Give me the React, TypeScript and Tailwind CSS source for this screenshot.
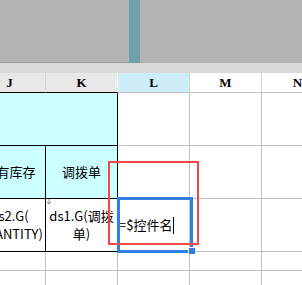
const cjk = "font-['Noto_Sans_CJK_SC','Noto_Sans',sans-serif]";

function HeadCell({ label, className }: { label: string; className: string }) {
  return (
    <div
      className={`flex items-center justify-center border-r border-b font-['Liberation_Serif',serif] text-[13px] font-bold leading-none text-black ${className}`}
    >
      {label}
    </div>
  );
}

export default function App() {
  return (
    <div className={`relative h-[285px] w-[302px] overflow-hidden bg-white ${cjk}`}>
      {/* window chrome above the sheet */}
      <div className="flex h-[63px]">
        <div className="h-[63px] w-[129px] border-b border-[#9a9a9a] bg-[#b3b3b3]" />
        <div className="h-[63px] w-[11px] bg-[#6fa1ac]" />
        <div className="h-[63px] flex-1 bg-[#b3b3b3]" />
      </div>
      <div className="h-[10px] bg-[#d9d9db]" />

      <div className="-ml-[26px] grid grid-cols-[72px_72px_72px_72px_72px] grid-rows-[20px_53px_53px_53px_19px_19px] text-[13px] text-black">
        {/* column headers */}
        <HeadCell label="J" className="border-r-[#d4d4d4] border-b-black bg-[#e8e8e8]" />
        <HeadCell label="K" className="border-r-white border-b-black bg-[#e8e8e8]" />
        <HeadCell label="L" className="border-r-[#d4d4d4] border-b-[#c0c0c0] bg-[#cdeef9]" />
        <HeadCell label="M" className="border-r-[#d4d4d4] border-b-[#c0c0c0] bg-white" />
        <HeadCell label="N" className="border-r-[#d4d4d4] border-b-[#c0c0c0] bg-white" />

        {/* row 1: merged title */}
        <div className="col-span-2 border-r border-b border-black bg-[#ccffff]" />
        <div className="border-r border-b border-[#c0c0c0]" />
        <div className="border-r border-b border-[#c0c0c0]" />
        <div className="border-r border-b border-[#c0c0c0]" />

        {/* row 2 */}
        <div className="flex items-center justify-center border-r border-b border-black bg-[#ccffff]">现有库存</div>
        <div className="flex items-center justify-center border-r border-b border-black bg-[#ccffff]">调拨单</div>
        <div className="border-r border-b border-[#c0c0c0]" />
        <div className="border-r border-b border-[#c0c0c0]" />
        <div className="border-r border-b border-[#c0c0c0]" />

        {/* row 3 */}
        <div className="flex items-center justify-center border-r border-b border-black text-center leading-[18px]">
          <span>
            ds2.G(
            <br />
            QUANTITY)
          </span>
        </div>
        <div className="relative flex items-center justify-center border-r border-b border-black text-center leading-[18px]">
          <svg className="absolute left-[0px] top-[0px]" width="6" height="6" viewBox="0 0 6 6">
            <path d="M3 0V5M1 3L3 5L5 3" stroke="#8a8a8a" strokeWidth="1" fill="none" />
          </svg>
          <span>
            ds1.G(调拨
            <br />
            单)
          </span>
        </div>
        <div className="flex items-center border-r border-b border-[#c0c0c0] pl-[1px]">
          <span>=$控件名</span>
          <span className="ml-[1px] h-[17px] w-px bg-black" />
        </div>
        <div className="border-r border-b border-[#c0c0c0]" />
        <div className="border-r border-b border-[#c0c0c0]" />

        {/* rows 4-5 */}
        {Array.from({ length: 10 }).map((_, i) => (
          <div key={i} className="border-r border-b border-[#c0c0c0]" />
        ))}
      </div>

      {/* selection and highlight overlays */}
      <div className="pointer-events-none absolute left-[117px] top-[197px] h-[56px] w-[76px] border-[3px] border-[#2f7fe6]" />
      <div className="pointer-events-none absolute left-[188px] top-[247px] h-[7px] w-[7px] border-l border-t border-white bg-[#2f7fe6]" />
      <div className="pointer-events-none absolute left-[108px] top-[161px] h-[84px] w-[91px] border-2 border-[#f24848]" />
    </div>
  );
}
